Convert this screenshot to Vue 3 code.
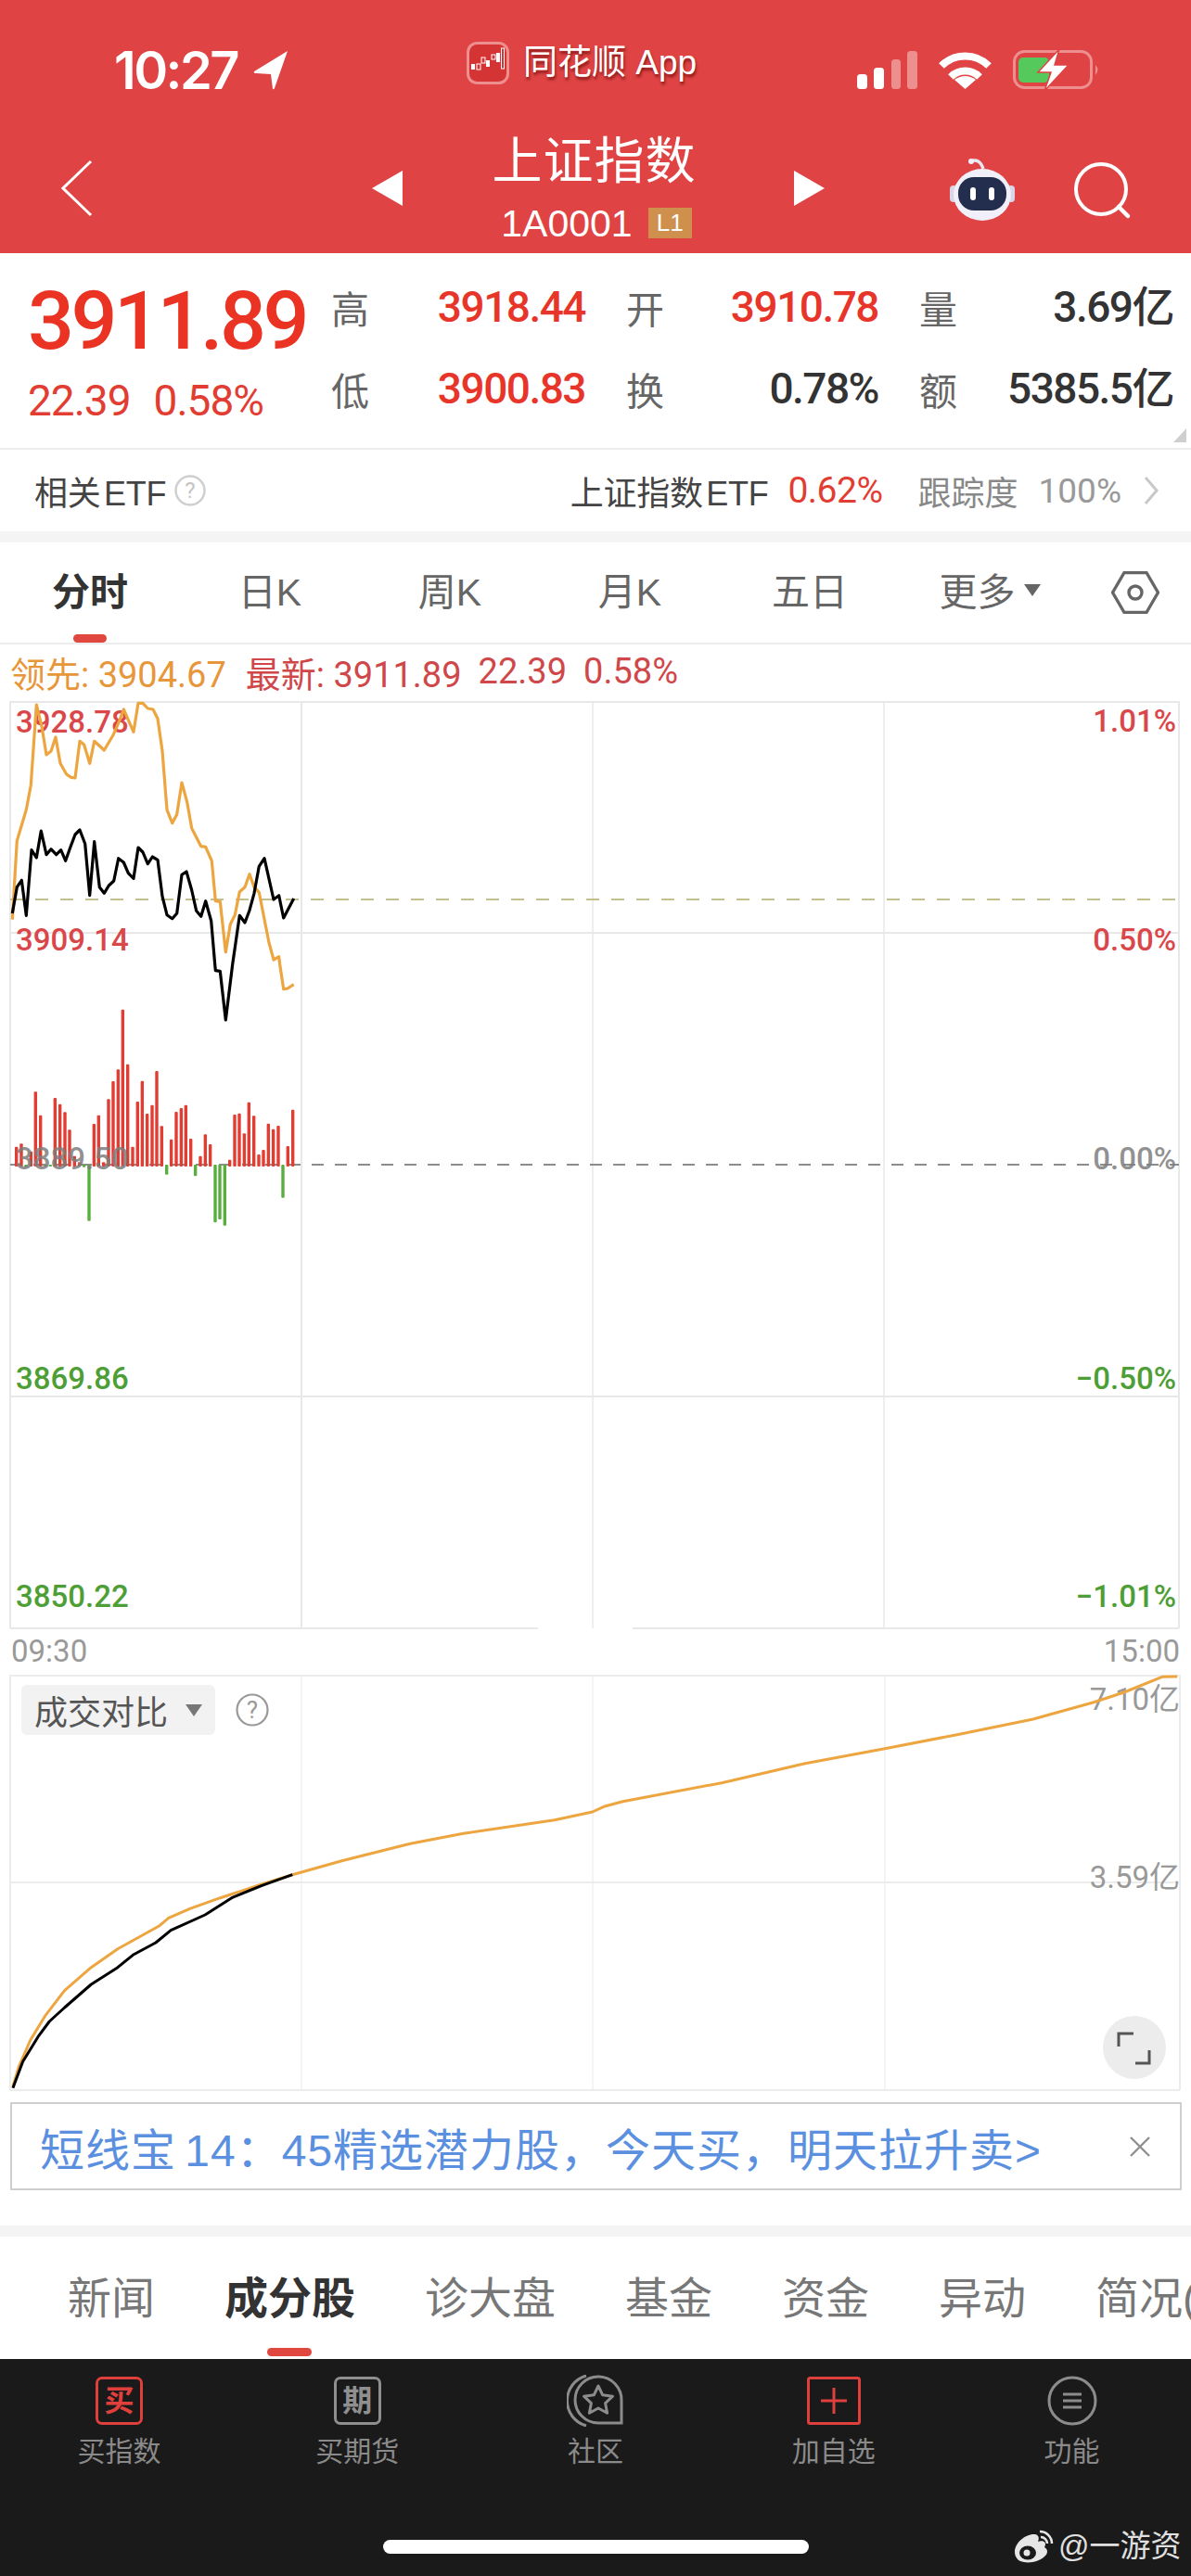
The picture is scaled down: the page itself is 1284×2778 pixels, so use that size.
<script setup>
const z3 = (pts) => pts.map(([h, v]) => `${(h / 3).toFixed(1)},${(740 + v / 3).toFixed(1)}`).join(' ')
const z5 = (pts) => pts.map(([h, v]) => `${(h / 1.2212).toFixed(1)},${(1740 + v / 3).toFixed(1)}`).join(' ')

const orange1 = z3([[40,755],[55,500],[85,400],[100,320],[118,60],[135,130],[150,222],[165,210],[180,165],[195,250],[215,285],[230,295],[243,297],[258,178],[272,190],[290,250],[305,178],[337,207],[365,160],[385,115],[400,75],[432,148],[447,55],[462,55],[478,72],[495,75],[510,105],[525,210],[540,400],[557,443],[572,415],[588,312],[605,375],[620,460],[650,518],[665,520],[685,565],[697,695],[712,697],[730,860],[745,770],[760,740],[775,665],[792,650],[807,608],[822,650],[838,667],[870,830],[885,885],[902,875],[905,900],[917,980],[930,978],[950,965]])
const black1 = z3([[40,735],[55,650],[70,628],[85,742],[102,530],[118,555],[133,468],[150,545],[165,527],[182,545],[197,530],[212,565],[228,520],[243,480],[258,465],[275,510],[290,677],[305,503],[322,650],[337,670],[352,645],[368,630],[383,557],[400,570],[415,605],[432,622],[447,522],[462,537],[478,575],[493,552],[510,562],[525,680],[540,740],[557,752],[572,735],[588,610],[603,600],[620,660],[635,727],[650,745],[665,695],[683,760],[695,900],[697,920],[712,922],[730,1080],[752,900],[775,742],[792,765],[807,725],[822,670],[838,583],[855,557],[885,690],[902,677],[917,750],[950,687]])

const rawBars = [[53,590],[69,580],[84,656],[100,605],[115,412],[131,488],[147,654],[163,654],[178,432],[194,452],[210,478],[225,535],[241,620],[257,640],[272,656],[288,830],[304,516],[319,488],[335,640],[351,436],[366,378],[382,340],[397,146],[413,323],[429,590],[445,444],[460,377],[476,483],[492,455],[507,345],[523,523],[539,680],[554,566],[570,477],[586,465],[601,455],[617,564],[632,685],[648,620],[664,550],[680,582],[696,835],[711,825],[727,845],[743,632],[759,486],[774,482],[790,547],[805,446],[821,490],[837,615],[852,600],[868,515],[884,533],[900,522],[915,755],[931,588],[947,470]]
const bars = rawBars.map(([h, v]) => {
  const up = v < 648
  return {
    x: h / 3 - 1.7,
    y: up ? 1040 + v / 3 : 1256,
    h: Math.abs(v - 648) / 3 + (up ? 2 : 0),
    c: up ? '#e23d33' : '#5aad3f',
  }
})

const orange2 = z5([[17,1530],[25,1465],[40,1380],[60,1300],[85,1220],[120,1145],[155,1085],[210,1010],[222,985],[250,955],[290,920],[340,880],[385,845],[450,800],[540,745],[610,712],[730,668],[780,642],[795,625],[820,608],[950,548],[1060,485],[1165,437],[1260,392],[1360,342],[1440,287],[1480,255],[1530,205],[1550,204]])
const black2 = z5([[17,1535],[30,1450],[50,1370],[65,1320],[85,1275],[120,1200],[155,1145],[175,1105],[205,1065],[225,1025],[270,975],[305,920],[345,880],[385,845]])

const leftLabels = [
  { t: '3928.78', y: 790, c: '#d9474a' },
  { t: '3909.14', y: 1025, c: '#d9474a' },
  { t: '3869.86', y: 1498, c: '#4d9e35' },
  { t: '3850.22', y: 1733, c: '#4d9e35' },
]
const rightLabels = [
  { t: '1.01%', y: 789, c: '#d9474a' },
  { t: '0.50%', y: 1025, c: '#d9474a' },
  { t: '0.00%', y: 1261, c: 'rgba(125,125,125,.85)' },
  { t: '−0.50%', y: 1498, c: '#4d9e35' },
  { t: '−1.01%', y: 1733, c: '#4d9e35' },
]

const quotes = [
  { l: '高', v: '3918.44', red: true },
  { l: '开', v: '3910.78', red: true },
  { l: '量', v: '3.69亿', red: false },
  { l: '低', v: '3900.83', red: true },
  { l: '换', v: '0.78%', red: false },
  { l: '额', v: '5385.5亿', red: false },
]
const periods = ['分时', '日K', '周K', '月K', '五日']
const lowerTabs = ['新闻', '成分股', '诊大盘', '基金', '资金', '异动', '简况(F10)']
</script>

<template>
  <div class="page">
    <header class="header">
      <div class="status">
        <div class="time-wrap">
          <span class="time">10:27</span>
          <svg class="loc" width="38" height="42" viewBox="0 0 38 42"><path d="M37 0 L1 22 Q0 24 3 24 L19 25 L21 41 Q22 42 23 40 Z" fill="#fff"/></svg>
        </div>
        <div class="app">
          <svg width="46" height="46" viewBox="0 0 46 46">
            <rect x="1.5" y="1.5" width="43" height="43" rx="10" fill="#d53434" stroke="#ee8f8f" stroke-width="3"/>
            <g fill="#fff">
              <rect x="5" y="24" width="4" height="6"/><rect x="11" y="24" width="4" height="6" fill="none" stroke="#fff" stroke-width="1"/>
              <rect x="16" y="17" width="4" height="6" fill="none" stroke="#fff" stroke-width="1"/><rect x="21" y="20" width="4" height="7"/>
              <rect x="27" y="14" width="4" height="5" fill="none" stroke="#fff" stroke-width="1"/><rect x="32" y="12" width="4" height="10"/>
              <rect x="37.5" y="7" width="3" height="22" fill="none" stroke="#fff" stroke-width="1"/>
            </g>
          </svg>
          <span class="app-name">同花顺 App</span>
        </div>
        <svg class="sys" width="262" height="42" viewBox="0 0 262 42">
          <rect x="0" y="26" width="11" height="16" rx="3.5" fill="#fff"/>
          <rect x="18" y="19" width="11" height="23" rx="3.5" fill="#fff"/>
          <rect x="37" y="10" width="10" height="32" rx="3.5" fill="#ee8f8f"/>
          <rect x="54" y="1" width="11" height="41" rx="3.5" fill="#ee8f8f"/>
          <g fill="none" stroke="#fff" stroke-width="8">
            <path d="M91 17 A36 36 0 0 1 142 17"/>
            <path d="M101 29 A22 22 0 0 1 132 29"/>
          </g>
          <path d="M116.5 42 L105 32 Q116.5 24 128 32 Z" fill="#fff"/>
          <rect x="169.5" y="1.5" width="83" height="39" rx="11" fill="none" stroke="#ee8f8f" stroke-width="3"/>
          <rect x="174" y="8" width="33" height="27" rx="5" fill="#56c95c"/>
          <path d="M257 16 Q262 21 257 27 Z" fill="#ee8f8f"/>
          <path d="M218 -1 L195 24 L209 24 L202 44 L228 16 L213 16 Z" fill="#fff" stroke="#df4343" stroke-width="1.5"/>
        </svg>
      </div>
      <div class="nav">
        <div class="nav-back">
          <svg width="34" height="62" viewBox="0 0 34 62"><polyline points="32,2 2,31 32,60" fill="none" stroke="#fff" stroke-width="3"/></svg>
        </div>
        <svg width="33" height="38" viewBox="0 0 33 38"><path d="M33 0 V38 L0 19 Z" fill="#fff"/></svg>
        <div class="title-block">
          <div class="title">上证指数</div>
          <div class="code-row"><span class="code">1A0001</span><span class="badge">L1</span></div>
        </div>
        <svg width="33" height="38" viewBox="0 0 33 38"><path d="M0 0 V38 L33 19 Z" fill="#fff"/></svg>
        <svg class="robot" width="72" height="68" viewBox="1024 171 72 68">
          <path d="M1046 174 Q1056 170 1060 182" fill="none" stroke="#e8e6f2" stroke-width="3.5"/>
          <circle cx="1047" cy="174" r="3" fill="#f0eef8"/>
          <rect x="1024" y="200" width="8" height="18" rx="4" fill="#d9d6ea"/>
          <rect x="1086" y="200" width="8" height="18" rx="4" fill="#d9d6ea"/>
          <ellipse cx="1059" cy="210" rx="31" ry="28" fill="#f1eff9"/>
          <rect x="1033" y="191" width="52" height="36" rx="17" fill="#232d4d"/>
          <rect x="1046" y="202" width="6" height="14" rx="3" fill="#fff"/>
          <rect x="1066" y="202" width="6" height="14" rx="3" fill="#fff"/>
        </svg>
        <svg class="search" width="64" height="64" viewBox="1156 174 64 64">
          <circle cx="1187" cy="204" r="27" fill="none" stroke="#fff" stroke-width="4"/>
          <line x1="1206" y1="223" x2="1216" y2="233" stroke="#fff" stroke-width="4.5" stroke-linecap="round"/>
        </svg>
      </div>
    </header>

    <section class="quote">
      <div class="quote-main">
        <div class="big">3911.89</div>
        <div class="sub"><span>22.39</span><span>0.58%</span></div>
      </div>
      <div class="quote-grid">
        <div v-for="q in quotes" :key="q.l" class="pair">
          <span class="q-label">{{ q.l }}</span>
          <span class="q-val" :class="{ red: q.red }">{{ q.v }}</span>
        </div>
      </div>
      <svg class="corner" width="14" height="15" viewBox="0 0 14 15"><path d="M14 0 V15 H0 Z" fill="#cfcfcf"/></svg>
    </section>

    <section class="etf">
      <div class="etf-left">
        <span class="tight">相关 ETF</span>
        <svg width="34" height="34" viewBox="0 0 34 34">
          <circle cx="17" cy="17" r="15.5" fill="none" stroke="#cfcfcf" stroke-width="2.5"/>
          <text x="17" y="25" text-anchor="middle" class="q-mark" fill="#c4c4c4">?</text>
        </svg>
      </div>
      <div class="etf-right">
        <span class="etf-name tight">上证指数 ETF</span>
        <span class="etf-pct">0.62%</span>
        <span class="etf-track">跟踪度</span>
        <span class="etf-num">100%</span>
        <svg width="16" height="32" viewBox="0 0 16 32"><polyline points="2,2 14,16 2,30" fill="none" stroke="#c8c8c8" stroke-width="3"/></svg>
      </div>
    </section>
    <div class="gap"></div>

    <nav class="periods">
      <div v-for="(p, i) in periods" :key="p" class="period" :class="{ on: i === 0 }">{{ p }}</div>
      <div class="period">更多<span class="caret"></span></div>
      <div class="period">
        <svg class="hex" width="52" height="46" viewBox="0 0 52 46">
          <path d="M1.5 23 L14 1.5 H38 L50.5 23 L38 44.5 H14 Z" fill="none" stroke="#666" stroke-width="3.4" stroke-linejoin="round"/>
          <circle cx="26" cy="23" r="7" fill="none" stroke="#666" stroke-width="3.4"/>
        </svg>
      </div>
    </nav>

    <div class="legend">
      <span class="lg-orange">领先: 3904.67</span>
      <span class="lg-red">最新: 3911.89</span>
      <span class="lg-red">22.39</span>
      <span class="lg-red">0.58%</span>
    </div>

    <svg class="chart1" width="1284" height="1001" viewBox="0 756 1284 1001">
      <g stroke="#e8e8e8" stroke-width="2">
        <line x1="11" y1="757" x2="1271" y2="757"/>
        <line x1="11" y1="1006" x2="1271" y2="1006"/>
        <line x1="11" y1="1506" x2="1271" y2="1506"/>
        <line x1="11" y1="1756" x2="580" y2="1756"/>
        <line x1="682" y1="1756" x2="1271" y2="1756"/>
        <line x1="11" y1="756" x2="11" y2="1756"/>
        <line x1="1271" y1="756" x2="1271" y2="1756"/>
        <line x1="325" y1="756" x2="325" y2="1756"/>
        <line x1="639" y1="756" x2="639" y2="1756" stroke-width="1.5"/>
        <line x1="953" y1="756" x2="953" y2="1756" stroke-width="1.5"/>
      </g>
      <line x1="11" y1="970" x2="1271" y2="970" stroke="#c4bf8f" stroke-width="1.8" stroke-dasharray="14 13"/>
      <line x1="11" y1="1256" x2="1271" y2="1256" stroke="#8c8c8c" stroke-width="2" stroke-dasharray="13 12"/>
      <text v-for="l in leftLabels" :key="l.t" class="axis" x="17" :y="l.y" :fill="l.c">{{ l.t }}</text>
      <text v-for="l in rightLabels" :key="l.t" class="axis" x="1268" :y="l.y" :fill="l.c" text-anchor="end">{{ l.t }}</text>
      <rect v-for="(b, i) in bars" :key="i" :x="b.x" :y="b.y" width="3.4" :height="b.h" :fill="b.c" rx="1"/>
      <text class="axis" x="17" y="1261" fill="rgba(125,125,125,.85)">3889.50</text>
      <polyline :points="orange1" fill="none" stroke="#eda540" stroke-width="3.2" stroke-linejoin="round"/>
      <polyline :points="black1" fill="none" stroke="#000" stroke-width="3.2" stroke-linejoin="round"/>
    </svg>

    <div class="times"><span>09:30</span><span>15:00</span></div>

    <div class="chart2-wrap">
      <svg class="chart2" width="1284" height="449" viewBox="0 1806 1284 449">
        <g stroke="#ececec" stroke-width="2">
          <line x1="11" y1="1807" x2="1272" y2="1807"/>
          <line x1="11" y1="2030" x2="1272" y2="2030"/>
          <line x1="11" y1="2254" x2="1272" y2="2254"/>
          <line x1="11" y1="1806" x2="11" y2="2254"/>
          <line x1="1272" y1="1806" x2="1272" y2="2254"/>
          <line x1="325" y1="1806" x2="325" y2="2254" stroke-width="1.2"/>
          <line x1="639" y1="1806" x2="639" y2="2254" stroke-width="1.2"/>
          <line x1="954" y1="1806" x2="954" y2="2254" stroke-width="1.2"/>
        </g>
        <text class="axis2" x="1272" y="1844" text-anchor="end">7.10亿</text>
        <text class="axis2" x="1272" y="2036" text-anchor="end">3.59亿</text>
        <polyline :points="orange2" fill="none" stroke="#eda540" stroke-width="3" stroke-linejoin="round"/>
        <polyline :points="black2" fill="none" stroke="#000" stroke-width="3" stroke-linejoin="round"/>
        <circle cx="1223" cy="2208" r="34" fill="#ececec"/>
        <path d="M1222 2193 H1206 V2207 M1224 2225 H1239 V2211" fill="none" stroke="#555" stroke-width="3"/>
      </svg>
      <div class="chip"><span>成交对比</span><i class="chip-caret"></i></div>
      <svg class="chip-q" width="36" height="36" viewBox="0 0 36 36">
        <circle cx="18" cy="18" r="16.5" fill="none" stroke="#999" stroke-width="2.2"/>
        <text x="18" y="27" text-anchor="middle" class="q-mark2" fill="#999">?</text>
      </svg>
    </div>

    <div class="banner">
      <span class="banner-text">短线宝 14：45精选潜力股，今天买，明天拉升卖&gt;</span>
      <svg width="24" height="24" viewBox="0 0 24 24"><path d="M2 2 L22 22 M22 2 L2 22" stroke="#909090" stroke-width="2.4"/></svg>
    </div>
    <div class="gap lower-gap"></div>

    <nav class="lower-tabs">
      <div v-for="(t, i) in lowerTabs" :key="t" class="lower-tab" :class="{ on: i === 1 }">{{ t }}</div>
    </nav>

    <footer class="bottom">
      <div class="bottom-grid">
        <div class="b-item">
          <div class="b-icon"><span class="box-glyph red-box">买</span></div>
          <span>买指数</span>
        </div>
        <div class="b-item">
          <div class="b-icon"><span class="box-glyph gray-box">期</span></div>
          <span>买期货</span>
        </div>
        <div class="b-item">
          <div class="b-icon">
            <svg width="62" height="56" viewBox="0 0 62 56" fill="none" stroke="#8c8c8c" stroke-width="3">
              <path d="M21 1 A28 28 0 0 0 21 55"/>
              <path d="M59 52 V28 A25 25 0 1 0 34 52 Z"/>
              <path d="M34 12 L38.7 21.8 L49.5 23.2 L41.6 30.6 L43.6 41.3 L34 36 L24.4 41.3 L26.4 30.6 L18.5 23.2 L29.3 21.8 Z" stroke-linejoin="round"/>
            </svg>
          </div>
          <span>社区</span>
        </div>
        <div class="b-item">
          <div class="b-icon">
            <svg width="58" height="52" viewBox="0 0 58 52" fill="none" stroke="#e0403c" stroke-width="3">
              <rect x="1.5" y="1.5" width="55" height="49" rx="2"/>
              <path d="M29 12 V40 M15 26 H43"/>
            </svg>
          </div>
          <span>加自选</span>
        </div>
        <div class="b-item">
          <div class="b-icon">
            <svg width="54" height="54" viewBox="0 0 54 54" fill="none" stroke="#8c8c8c" stroke-width="3">
              <circle cx="27" cy="27" r="25"/>
              <path d="M17 20 H37 M17 27 H37 M17 34 H37"/>
            </svg>
          </div>
          <span>功能</span>
        </div>
      </div>
      <div class="home"></div>
      <div class="mark">
        <svg width="46" height="38" viewBox="0 0 46 38">
          <path d="M2 25 C2 15 14 5 24 6 C29 7 28 12 27 14 C33 12 37 15 34 20 C38 22 38 27 34 30 C28 36 16 38 8 35 C4 33 2 29 2 25 Z" fill="#e6e6e6"/>
          <ellipse cx="16" cy="26" rx="9" ry="7.5" fill="#1a1a1a"/>
          <circle cx="15" cy="26" r="3.5" fill="#e6e6e6"/>
          <path d="M29 3 A13 13 0 0 1 42 16 M30 9 A7 7 0 0 1 37 16" fill="none" stroke="#e6e6e6" stroke-width="2.6"/>
        </svg>
        <span>@一游资</span>
      </div>
    </footer>
  </div>
</template>

<style scoped>
.page {
  position: relative;
  width: 1284px;
  height: 2778px;
  overflow: hidden;
  background: #fff;
  display: flex;
  flex-direction: column;
  font-family: "Liberation Sans", "Noto Sans CJK SC", sans-serif;
  color: #333;
}
.header { height: 273px; background: #df4343; color: #fff; flex: none; }
.status { height: 133px; display: grid; grid-template-columns: 380px 421px 1fr; padding: 45px 0 0 123px; box-sizing: border-box; align-items: start; }
.time-wrap { display: flex; align-items: center; gap: 17px; padding-top: 10px; }
.time { font: 600 56px/42px Inter, sans-serif; letter-spacing: -2.5px; }
.app { display: flex; align-items: center; gap: 15px; }
.app-name { font-size: 37px; line-height: 46px; text-shadow: 1px 3px 3px rgba(90, 0, 0, .65); }
.sys { margin-top: 9px; overflow: visible; }
.nav { height: 140px; display: flex; align-items: center; position: relative; }
.nav-back { width: 401px; padding-left: 66px; box-sizing: border-box; display: flex; }
.title-block { width: 422px; padding: 0 9px 10px 0; box-sizing: border-box; display: flex; flex-direction: column; align-items: center; }
.title { font-size: 54px; line-height: 76px; letter-spacing: 1px; }
.code-row { display: flex; align-items: center; gap: 17px; margin-top: 9px; margin-left: 5px; height: 40px; }
.code { font-size: 41px; line-height: 40px; color: #fff; }
.badge { width: 47px; height: 33px; background: #cf8f4d; font: 400 26px/33px "Liberation Sans", sans-serif; text-align: center; }
.robot { margin-left: 135px; margin-top: 3px; }
.search { margin-left: 60px; margin-top: 6px; }

.quote { height: 212px; flex: none; display: flex; position: relative; box-sizing: border-box; border-bottom: 2px solid #ededed; }
.quote-main { width: 357px; padding: 28px 0 0 30px; box-sizing: border-box; }
.big { font: 500 88px/90px Roboto, sans-serif; letter-spacing: -3.5px; color: #ea3323; }
.sub { display: flex; gap: 25px; margin-top: 16px; font: 400 46px/50px Roboto, sans-serif; letter-spacing: -1px; color: #e23d33; }
.quote-grid { width: 908px; display: grid; grid-template-columns: 274px 272px 274px; column-gap: 44px; grid-template-rows: 88px 88px; padding-top: 14px; box-sizing: border-box; }
.pair { display: flex; justify-content: space-between; align-items: center; }
.q-label { font-size: 41px; color: #666; }
.q-val { font: 500 46px/56px Roboto, "Noto Sans CJK SC", sans-serif; letter-spacing: -1.5px; color: #333; }
.q-val.red { color: #e8352a; }
.corner { position: absolute; right: 5px; bottom: 6px; }

.etf { height: 88px; flex: none; display: flex; align-items: center; justify-content: space-between; padding: 0 35px 0 37px; font-size: 36px; color: #444; }
.tight { word-spacing: -6px; letter-spacing: -.3px; }
.etf-left { display: flex; align-items: center; gap: 9px; }
.etf-right { display: flex; align-items: center; }
.etf-pct { font: 400 39px Roboto, sans-serif; letter-spacing: -.5px; color: #e23d33; margin-left: 21px; }
.etf-track { color: #888; margin-left: 38px; }
.etf-num { font: 400 37px Roboto, sans-serif; color: #999; margin-left: 22px; margin-right: 24px; }
.q-mark { font: 400 24px Roboto, sans-serif; }
.q-mark2 { font: 400 26px Roboto, sans-serif; }
.gap { height: 12px; flex: none; background: #f4f4f4; }

.periods { height: 110px; flex: none; display: grid; grid-template-columns: repeat(6, 194px) 1fr; border-bottom: 2px solid #ededed; box-sizing: border-box; }
.period { position: relative; display: flex; align-items: center; justify-content: center; font-size: 41px; color: #666; padding-bottom: 8px; }
.period.on { color: #333; font-weight: 700; }
.period.on::after { content: ""; position: absolute; left: 79px; bottom: 0; width: 36px; height: 9px; border-radius: 5px; background: #e0483f; }
.hex { margin-top: 7px; }
.caret { margin-left: 9px; margin-top: 2px; border-left: 9px solid transparent; border-right: 9px solid transparent; border-top: 13px solid #666; }

.legend { height: 61px; flex: none; box-sizing: border-box; padding: 0 0 3px 11px; display: flex; align-items: center; gap: 18px; font: 400 38px Roboto, "Noto Sans CJK SC", sans-serif; }
.lg-orange { color: #e8963a; margin-right: 3px; }
.lg-red { color: #d0474a; }

.chart1, .chart2 { display: block; flex: none; }
.axis { font: 500 33px Roboto, sans-serif; }
.axis2 { font: 400 33px Roboto, "Noto Sans CJK SC", sans-serif; fill: #999; }
.times { height: 49px; flex: none; box-sizing: border-box; display: flex; justify-content: space-between; align-items: center; padding: 0 12px 2px; font: 400 33px Roboto, sans-serif; color: #999; }
.chart2-wrap { position: relative; height: 449px; flex: none; }
.chip { position: absolute; left: 23px; top: 11px; width: 209px; height: 54px; box-sizing: border-box; border-radius: 6px; background: #f2f2f2; display: flex; align-items: center; padding-left: 14px; font-size: 36px; color: #555; }
.chip-caret { margin-left: 19px; border-left: 9px solid transparent; border-right: 9px solid transparent; border-top: 13px solid #777; }
.chip-q { position: absolute; left: 254px; top: 20px; }

.banner { height: 95px; flex: none; box-sizing: border-box; margin: 12px 10px 38px 11px; border: 2px solid #cfcfcf; display: flex; align-items: center; justify-content: space-between; padding: 0 31px 0 30px; }
.banner-text { font-size: 48px; letter-spacing: 1px; word-spacing: -5px; color: #5b8fe0; white-space: nowrap; }

.lower-tabs { height: 132px; flex: none; position: relative; display: flex; align-items: center; gap: 75px; padding: 0 0 0 73px; overflow: hidden; font-size: 47px; color: #777; white-space: nowrap; }
.lower-tab { position: relative; line-height: 60px; margin-top: 1px; }
.lower-tab.on { color: #333; font-weight: 700; }
.lower-tab.on::after { content: ""; position: absolute; left: 46px; top: 83px; width: 48px; height: 9px; border-radius: 5px; background: #e0483f; }

.bottom { flex: 1; position: relative; background: #1a1a1a; color: #8a8a8a; display: flex; flex-direction: column; align-items: center; }
.bottom-grid { width: 100%; display: grid; grid-template-columns: repeat(5, 1fr); padding-top: 18px; }
.b-item { display: flex; flex-direction: column; align-items: center; font-size: 30px; line-height: 30px; }
.b-icon { height: 54px; display: flex; align-items: center; justify-content: center; margin-bottom: 13px; }
.box-glyph { width: 51px; height: 52px; box-sizing: border-box; border-radius: 7px; border: 3px solid; display: flex; align-items: center; justify-content: center; font-size: 32px; font-weight: 700; line-height: 1; }
.red-box { color: #e0403c; }
.gray-box { color: #8f8f8f; }
.home { width: 459px; height: 15px; border-radius: 8px; background: #fff; margin-top: 80px; }
.mark { position: absolute; left: 1092px; top: 183px; display: flex; align-items: center; gap: 3px; font-size: 33px; line-height: 38px; color: #e0e0e0; }
</style>
